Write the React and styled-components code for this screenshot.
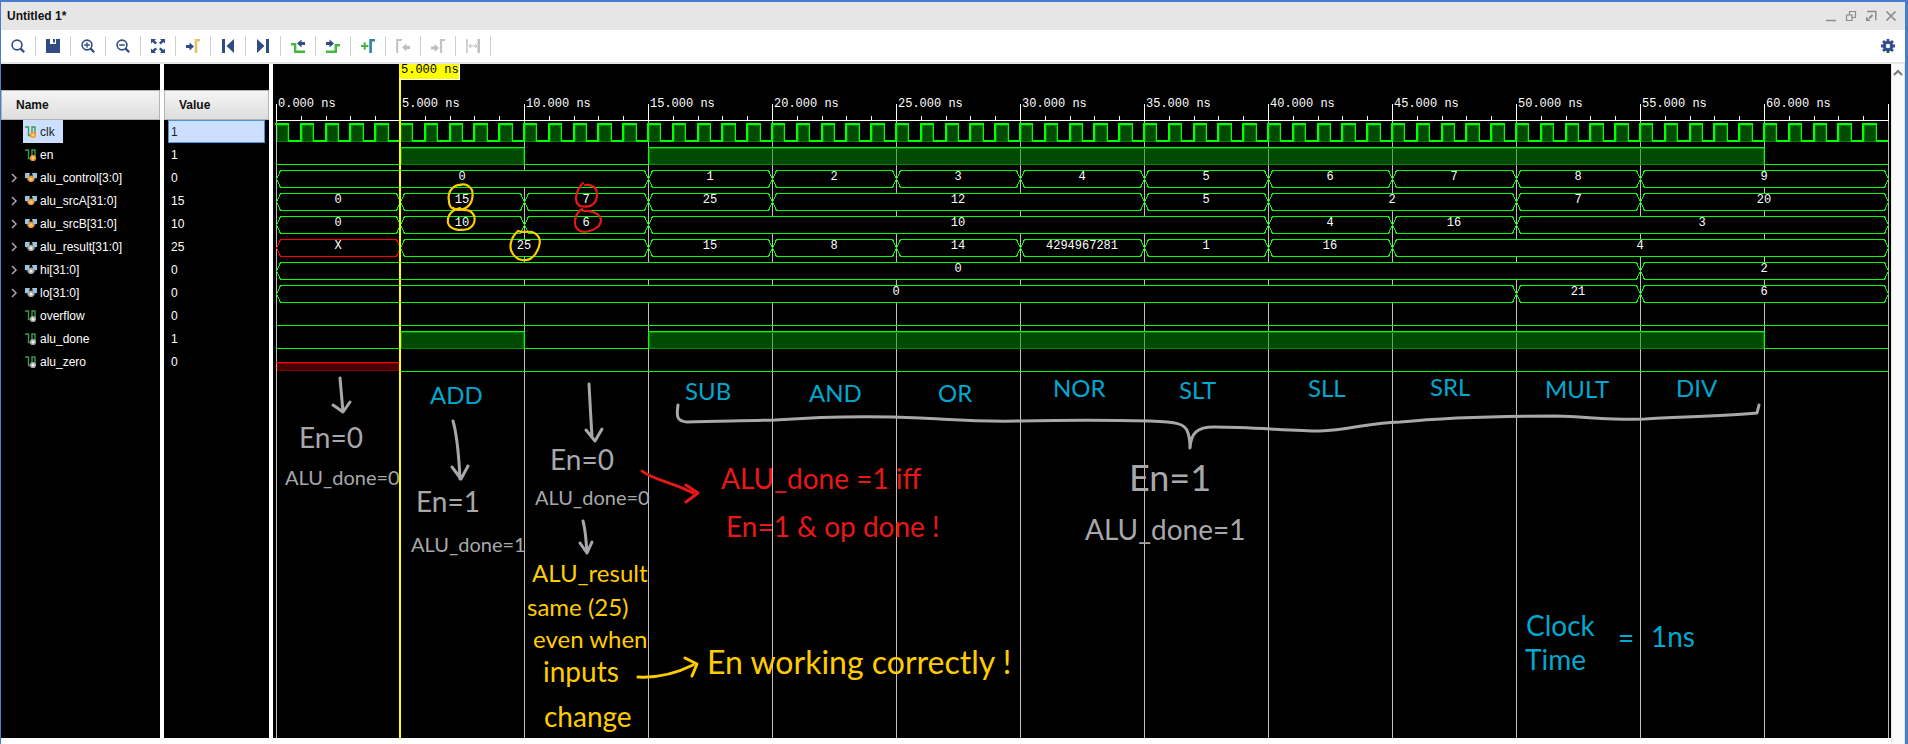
import React from "react";
import styled, { createGlobalStyle } from "styled-components";

const GlobalStyle = createGlobalStyle`
  * { box-sizing: border-box; }
  body { margin: 0; background: #fff; font-family: "Liberation Sans", Arial, sans-serif; font-size: 12px; }
`;

const NAVY = "#2f4c85";
const GREEN = "#00ff00";

const Frame = styled.div`
  display: flex;
  flex-direction: column;
  min-height: 100vh;
  border: solid #4a7bd0;
  border-width: 2px 3px 0 1px;
`;

const TitleBar = styled.header`
  display: flex;
  align-items: center;
  justify-content: space-between;
  height: 28px;
  padding: 0 8px 0 6px;
  background: #e6e6e6;
`;

const Title = styled.h1`
  margin: 0;
  font-size: 12px;
  font-weight: bold;
  color: #111;
`;

const WindowButtons = styled.div`
  display: flex;
  gap: 8px;
`;

const BareButton = styled.button`
  display: flex;
  align-items: center;
  justify-content: center;
  margin: 0;
  padding: 0;
  border: 0;
  background: transparent;
`;

const WindowButton = styled(BareButton)`
  width: 12px;
  height: 12px;
`;

const Toolbar = styled.nav`
  display: flex;
  align-items: center;
  height: 34px;
  padding-right: 10px;
  background: #fff;
  border-bottom: 2px solid #e6e6e6;
`;

const ToolButton = styled(BareButton)`
  width: 35px;
  height: 20px;
  border-right: 1px solid #d0d0d0;
`;

const SettingsButton = styled(BareButton)`
  width: 14px;
  height: 14px;
  margin-left: auto;
`;

const Body = styled.main`
  display: flex;
  flex: 1;
`;

const SignalPanel = styled.section`
  display: flex;
  flex: none;
  width: 272px;
  margin-bottom: 6px;
  background: #000;
`;

const SignalTable = styled.table`
  width: 100%;
  border-collapse: separate;
  border-spacing: 0;
  table-layout: fixed;
  color: #fff;
`;

const NameCol = styled.col`
  width: 163px;
`;

const Spacer = styled.tr`
  height: ${(p) => (p.$height ? p.$height + "px" : "auto")};
  td { padding: 0; border-right: 4px solid #fff; }
`;

const HeadCell = styled.th`
  height: 30px;
  padding: 0;
  border-right: 4px solid #fff;
  text-align: left;
  color: #111;
`;

const HeadLabel = styled.div`
  display: flex;
  align-items: center;
  height: 30px;
  padding-left: 14px;
  border: 1px solid #b4b4b4;
  background: linear-gradient(#f4f4f4, #dedede);
`;

const SignalRow = styled.tr`
  height: 23px;
`;

const SignalCell = styled.td`
  height: 23px;
  padding: 0;
  border-right: 4px solid #fff;
`;

const SignalName = styled.div`
  display: flex;
  align-items: center;
  height: 23px;
  padding-left: 8px;
`;

const Expander = styled.span`
  display: flex;
  width: 14px;
`;

const ExpandButton = styled(BareButton)`
  width: 10px;
  height: 12px;
`;

const NameTag = styled.span`
  display: flex;
  align-items: center;
  gap: 3px;
  height: 23px;
  padding: 0 8px 0 2px;
  white-space: nowrap;
  background: ${(p) => (p.$selected ? "#ccdfff" : "transparent")};
  color: ${(p) => (p.$selected ? "#222" : "#fff")};
`;

const SignalValue = styled.div`
  display: flex;
  align-items: center;
  height: 23px;
  margin: 0 4px;
  padding-left: 2px;
  border: 1px solid ${(p) => (p.$selected ? "#4797d8" : "transparent")};
  background: ${(p) => (p.$selected ? "#ccdfff" : "transparent")};
  color: ${(p) => (p.$selected ? "#222" : "#fff")};
`;

const WaveArea = styled.section`
  display: flex;
  flex: 1;
  min-width: 0;
  margin-bottom: 6px;
  background: #000;
`;

const WaveSvg = styled.svg`
  flex: 1;
  min-width: 0;
  min-height: 674px;
  display: block;
  overflow: hidden;
`;

const MonoText = styled.text`
  font-family: "Liberation Mono", "Courier New", monospace;
  font-size: 12px;
  fill: ${(p) => p.$color || "#fff"};
`;

const HandText = styled.text`
  font-family: Lato, sans-serif;
  font-size: ${(p) => p.$size}px;
  fill: ${(p) => p.$color};
`;

const Ink = styled.path`
  fill: none;
  stroke: ${(p) => p.$color};
  stroke-width: ${(p) => p.$width || 2}px;
  stroke-linecap: round;
  stroke-linejoin: round;
`;

const ScrollTrack = styled.div`
  display: flex;
  justify-content: center;
  flex: none;
  width: 14px;
  padding-top: 4px;
  background: #fafafa;
  border: solid #e6e6e6;
  border-width: 0 1px;
`;

const ScrollButton = styled(BareButton)`
  width: 12px;
  height: 8px;
`;

/* ---------- toolbar icons ---------- */

const Icon = ({ children, size = 14 }) => (
  <svg width={size} height={size} viewBox="0 0 14 14" fill="none" aria-hidden="true">
    {children}
  </svg>
);

const Lens = ({ children }) => (
  <Icon>
    <circle cx="6" cy="6" r="4.9" stroke={NAVY} strokeWidth="1.6" />
    <path d="M9.6 9.6 13.2 13.2" stroke={NAVY} strokeWidth="2.2" />
    {children}
  </Icon>
);

const arrowRight = (x, y, c) => (
  <path d={`M${x} ${y - 1.5}h3.5v-2.5l4.5 4-4.5 4v-2.5h-3.5z`} fill={c} />
);
const arrowLeft = (x, y, c) => (
  <path d={`M${x} ${y - 1.5}h-3.5v-2.5l-4.5 4 4.5 4v-2.5h3.5z`} fill={c} />
);

const TOOLS = [
  ["Find", <Lens />],
  ["Save", <Icon><path d="M0 0h4v5h6V0h4v14H0z" fill={NAVY} /><path d="M7 0h2v3.5H7z" fill={NAVY} /></Icon>],
  ["Zoom in", <Lens><path d="M3.2 6h5.6M6 3.2v5.6" stroke={NAVY} strokeWidth="1.3" /></Lens>],
  ["Zoom out", <Lens><path d="M3.2 6h5.6" stroke={NAVY} strokeWidth="1.5" /></Lens>],
  ["Zoom fit", <Icon>
    <path d="M0 0h5L3.6 1.4 6 3.8 4.3 5.5 1.6 3 0 4.6zM14 0v4.6L12.4 3 9.7 5.5 8 3.8l2.400-2.400L9 0zM0 14V9.400L1.600 11l2.700-2.500L6 10.200l-2.400 2.400L5 14zM14 14H9l1.400-1.400L8 10.200l1.700-1.700 2.700 2.500L14 9.400z" fill={NAVY} />
  </Icon>],
  ["Go to cursor", <Icon>{arrowRight(0, 7.5, NAVY)}<path d="M10 14V1.200h4" stroke="#e3c567" strokeWidth="2.600" /></Icon>],
  ["Previous", <Icon><path d="M1 0h3v14H1zM13 0v14L5.500 7z" fill={NAVY} /></Icon>],
  ["Next", <Icon><path d="M13 0h-3v14h3zM1 0v14l7.500-7z" fill={NAVY} /></Icon>],
  ["Previous transition", <Icon>
    <path d="M0 5.200h4.200v7.600H14" stroke="#43b83c" strokeWidth="2.400" />{arrowLeft(14, 4.5, NAVY)}
  </Icon>],
  ["Next transition", <Icon>
    <path d="M0 12.800h9.800V6.200H14" stroke="#43b83c" strokeWidth="2.400" />{arrowRight(0, 4.5, NAVY)}
  </Icon>],
  ["Add marker", <Icon>
    <path d="M0 7h7.400M3.700 3.300v7.400" stroke="#43b83c" strokeWidth="2" /><path d="M9.600 14V1.200H14" stroke="#2f7fb0" strokeWidth="2.600" />
  </Icon>],
  ["Previous marker", <Icon>
    <path d="M1.200 14V1H6" stroke="#c3c3c3" strokeWidth="2" />{arrowLeft(14, 8.5, "#bdbdbd")}
  </Icon>],
  ["Next marker", <Icon>
    {arrowRight(0, 9, "#bdbdbd")}<path d="M10 14V1h4" stroke="#c3c3c3" strokeWidth="2.200" />
  </Icon>],
  ["Swap cursors", <Icon>
    <path d="M1 1v12M0 1h2M0 13h2" stroke="#c3c3c3" strokeWidth="1.500" /><path d="M12.700 0v14" stroke="#bdbdbd" strokeWidth="2.400" />
    <path d="M3 7h8M5 5 3 7l2 2M9 5l2 2-2 2" stroke="#bdbdbd" strokeWidth="1" />
  </Icon>],
];

const Gear = () => (
  <Icon>
    <circle cx="7" cy="7" r="3.7" stroke={NAVY} strokeWidth="3" />
    {[0, 45, 90, 135].map((a) => (
      <path key={a} d="M7 0v2.500M7 11.500V14" stroke={NAVY} strokeWidth="2.800" transform={`rotate(${a} 7 7)`} />
    ))}
  </Icon>
);

const WINDOW_TOOLS = [
  ["Minimize", <path d="M1 10.500h10" stroke="#8c8c8c" strokeWidth="1.500" />],
  ["Restore", <g stroke="#8c8c8c" strokeWidth="1.200"><path d="M1.500 5h5.500v5.500H1.500z" /><path d="M4.500 5V1.500H10.500V7.500H7" /></g>],
  ["Float", <g stroke="#8c8c8c"><path d="M2 1.500h8.800v8.800" strokeWidth="1.500" /><path d="M7.500 5 4 8.500" strokeWidth="2" /><path d="M1 6.500V11h4.500z" fill="#8c8c8c" stroke="none" /></g>],
  ["Close", <path d="M1.500 1.500l9 9M10.500 1.500l-9 9" stroke="#8c8c8c" strokeWidth="1.700" />],
];

/* ---------- signals ---------- */

const SIGNALS = [
  { name: "clk", value: "1", kind: "wire", dir: "in", selected: true },
  { name: "en", value: "1", kind: "wire", dir: "in" },
  { name: "alu_control[3:0]", value: "0", kind: "bus", dir: "in" },
  { name: "alu_srcA[31:0]", value: "15", kind: "bus", dir: "in" },
  { name: "alu_srcB[31:0]", value: "10", kind: "bus", dir: "in" },
  { name: "alu_result[31:0]", value: "25", kind: "bus", dir: "out" },
  { name: "hi[31:0]", value: "0", kind: "bus", dir: "out" },
  { name: "lo[31:0]", value: "0", kind: "bus", dir: "out" },
  { name: "overflow", value: "0", kind: "wire", dir: "out" },
  { name: "alu_done", value: "1", kind: "wire", dir: "out" },
  { name: "alu_zero", value: "0", kind: "wire", dir: "out" },
];

const SignalIcon = ({ kind, dir }) => {
  const ring = dir === "in" ? "#f59a2c" : "#a9a9a9";
  const core = dir === "in" ? "#ffd08a" : "#f0f0f0";
  return (
    <svg width="12" height="14" viewBox="0 0 12 14" fill="none" aria-hidden="true">
      {kind === "wire" ? (
        <path d="M0 2h3.500v8.500H7V2h3v7" stroke="#3c9a4c" strokeWidth="1.400" />
      ) : (
        <g>
          <path d="M0 2h5v5H0zM7 2h5v5H7z" fill="#9cc3d9" />
          <path d="M4 2l2 3 2-3v7H4zM1 7h3l1 3H3z M11 7H8L7 10h2z" fill="#56636c" />
        </g>
      )}
      <circle cx={kind === "wire" ? 8 : 6} cy={kind === "wire" ? 10 : 8} r="2.3" fill={core} stroke={ring} strokeWidth="1.6" />
    </svg>
  );
};

/* ---------- waveform ---------- */

const X0 = 3;
const PX_PER_NS = 24.8;
const END = 65;
const at = (t) => X0 + Math.round(t * PX_PER_NS);
const rowTop = (i) => 60 + 23 * i;
const rowBottom = (i) => 77 + 23 * i;

const BUSES = [
  { row: 2, parts: [[0, 15, "0"], [15, 20, "1"], [20, 25, "2"], [25, 30, "3"], [30, 35, "4"], [35, 40, "5"], [40, 45, "6"], [45, 50, "7"], [50, 55, "8"], [55, 65, "9"]] },
  { row: 3, parts: [[0, 5, "0"], [5, 10, "15"], [10, 15, "7"], [15, 20, "25"], [20, 35, "12"], [35, 40, "5"], [40, 50, "2"], [50, 55, "7"], [55, 65, "20"]] },
  { row: 4, parts: [[0, 5, "0"], [5, 10, "10"], [10, 15, "6"], [15, 40, "10"], [40, 45, "4"], [45, 50, "16"], [50, 65, "3"]] },
  { row: 5, parts: [[0, 5, "X"], [5, 15, "25"], [15, 20, "15"], [20, 25, "8"], [25, 30, "14"], [30, 35, "4294967281"], [35, 40, "1"], [40, 45, "16"], [45, 65, "4"]] },
  { row: 6, parts: [[0, 55, "0"], [55, 65, "2"]] },
  { row: 7, parts: [[0, 50, "0"], [50, 55, "21"], [55, 65, "6"]] },
];

const BusPart = ({ row, from, to, label }) => {
  const a = at(from) + 0.5;
  const b = at(to) + 0.5;
  const top = rowTop(row) + 0.5;
  const bottom = rowBottom(row) + 0.5;
  const mid = (top + bottom) / 2;
  return (
    <g>
      <path
        d={`M${a} ${mid}L${a + 4} ${top}H${b - 4}L${b} ${mid}L${b - 4} ${bottom}H${a + 4}Z`}
        fill="#000"
        stroke={label === "X" ? "#ff0000" : GREEN}
        shapeRendering="crispEdges"
      />
      <MonoText x={Math.round((a + b) / 2) - 1} y={rowTop(row) + 10} textAnchor="middle">{label}</MonoText>
    </g>
  );
};

const Clock = () => {
  const top = rowTop(0);
  const bottom = rowBottom(0);
  let d = `M${X0 - 1} ${top}`;
  const fills = [];
  for (let t = 0; t < END; t++) {
    const rise = at(t);
    const fall = at(t + 0.5);
    d += t === 0 ? `H${fall}V${bottom}` : `H${rise}V${top}H${fall}V${bottom}`;
    fills.push(<rect key={t} x={rise + 1.5} y={top + 1.5} width={fall - rise - 2} height={bottom - top - 1} />);
  }
  d += `H${at(END)}`;
  return (
    <g shapeRendering="crispEdges">
      <path d={d} fill="none" stroke={GREEN} strokeWidth="2" />
      <g fill="#004b00" stroke="#007d00">{fills}</g>
    </g>
  );
};

const Level = ({ row, highs, from = 0 }) => {
  const top = rowTop(row) + 0.5;
  const bottom = rowBottom(row) + 0.5;
  let d = `M${at(from)} ${bottom}`;
  highs.forEach(([a, b]) => {
    d += `H${at(a) + 0.5}V${top}H${at(b) + 0.5}V${bottom}`;
  });
  d += `H${at(END)}`;
  return (
    <g shapeRendering="crispEdges">
      <path d={d} fill="none" stroke={GREEN} />
      {highs.map(([a, b]) => (
        <rect key={a} x={at(a) + 1.5} y={top + 1} width={at(b) - at(a) - 2} height={bottom - top - 1} fill="rgba(0,150,0,0.5)" stroke="#008700" />
      ))}
    </g>
  );
};

const majors = Array.from({ length: 14 }, (_, i) => i * 5);
const minors = Array.from({ length: 65 }, (_, i) => i).filter((t) => t % 5);

const GREY = "#a8a8ac";
const CYAN = "#00a8d0";
const YELLOW = "#ffcc00";
const RED = "#e81818";

const NOTES = [
  [299, 448, 28, GREY, "En=0"],
  [285, 485, 20, GREY, "ALU_done=0"],
  [430, 404, 24, CYAN, "ADD"],
  [416, 512, 28, GREY, "En=1"],
  [411, 552, 20, GREY, "ALU_done=1"],
  [550, 470, 28, GREY, "En=0"],
  [535, 505, 20, GREY, "ALU_done=0"],
  [532, 582, 24, YELLOW, "ALU_result"],
  [527, 616, 24, YELLOW, "same (25)"],
  [533, 648, 24, YELLOW, "even when"],
  [543, 682, 28, YELLOW, "inputs"],
  [544, 727, 28, YELLOW, "change"],
  [707, 674, 32, YELLOW, "En working correctly !"],
  [721, 489, 28, RED, "ALU_done =1 iff"],
  [726, 537, 28, RED, "En=1 & op done !"],
  [685, 400, 24, CYAN, "SUB"],
  [809, 402, 24, CYAN, "AND"],
  [938, 402, 24, CYAN, "OR"],
  [1053, 397, 24, CYAN, "NOR"],
  [1179, 399, 24, CYAN, "SLT"],
  [1308, 397, 24, CYAN, "SLL"],
  [1430, 396, 24, CYAN, "SRL"],
  [1545, 398, 24, CYAN, "MULT"],
  [1676, 397, 24, CYAN, "DIV"],
  [1129, 491, 36, GREY, "En=1"],
  [1085, 540, 28, GREY, "ALU_done=1"],
  [1526, 636, 28, CYAN, "Clock"],
  [1525, 670, 28, CYAN, "Time"],
  [1618, 648, 28, CYAN, "="],
  [1651, 647, 28, CYAN, "1ns"],
];

const STROKES = [
  [GREY, 3, "M340 378C341 390 342 400 343 412M333 405L343 412L350 402"],
  [GREY, 3, "M453 421C458 438 459 460 460 479M452 467L461 479L468 466"],
  [GREY, 3, "M589 384C590 402 591 422 592 436M586 430L595 441L602 429"],
  [GREY, 3, "M583 521C586 532 586 542 587 553M580 543L587 553L592 542"],
  [RED, 3, "M642 471C651 479 674 483 693 493M686 485L698 493L686 502"],
  [YELLOW, 3, "M638 677C658 678 675 674 693 665M685 658L697 664L692 676"],
  [GREY, 3, "M678 405C677 414 675 421 687 422C720 421 745 421 775 420C830 416 880 416 920 418C960 420 980 422 1020 421C1065 420 1110 420 1150 421C1175 422 1186 423 1188 433C1190 439 1190 443 1190 448C1191 433 1197 427 1214 427C1255 427 1290 431 1320 431C1350 430 1365 423 1400 422C1450 417 1500 416 1555 416C1590 417 1610 420 1645 419C1680 417 1725 416 1757 413L1759 405"],
  [YELLOW, 2.2, "M462 185C453 184 447 192 449 201C449 209 455 211 463 209C471 207 474 198 472 190C470 186 465 183 460 185"],
  [YELLOW, 2.2, "M460 208C451 210 447 216 448 223C450 230 460 231 468 229C476 225 477 216 470 211C465 209 457 211 453 208"],
  [YELLOW, 2.2, "M518 231C511 237 508 248 513 254C518 262 530 263 536 253C542 243 541 235 532 232C526 231 522 233 518 231"],
  [RED, 2.2, "M583 183C576 190 573 202 580 206C588 208 597 206 597 194C597 187 591 184 585 185"],
  [RED, 2.2, "M582 209C574 214 572 227 580 231C588 234 601 228 601 220C600 213 590 210 584 211"],
];

const Waveform = () => (
  <WaveSvg role="img" aria-label="ALU simulation waveform">
    <g shapeRendering="crispEdges">
      {majors.map((t) => (
        <g key={t}>
          <line x1={at(t) + 0.5} x2={at(t) + 0.5} y1="56" y2="100%" stroke="#bebebe" />
          <line x1={at(t) + 0.5} x2={at(t) + 0.5} y1="40" y2="57" stroke="#fff" />
        </g>
      ))}
      {minors.map((t) => (
        <line key={t} x1={at(t) + 0.5} x2={at(t) + 0.5} y1="52" y2="56" stroke="#fff" />
      ))}
      <line x1={at(0)} x2={at(END)} y1="56.5" y2="56.5" stroke="#fff" />
    </g>
    {majors.slice(0, 13).map((t) => (
      <MonoText key={t} x={at(t) + 2} y="43">{`${t}.000 ns`}</MonoText>
    ))}
    <Clock />
    <Level row={1} highs={[[5, 10], [15, 60]]} />
    {BUSES.map((b) =>
      b.parts.map(([from, to, label]) => (
        <BusPart key={b.row + "-" + from} row={b.row} from={from} to={to} label={label} />
      ))
    )}
    <Level row={8} highs={[]} />
    <Level row={9} highs={[[5, 10], [15, 60]]} />
    <Level row={10} highs={[]} from={5} />
    <g shapeRendering="crispEdges">
      <rect x={at(0) + 1.5} y="299.5" width={at(5) - at(0) - 3} height="7" fill="#4b0000" stroke="#7d0000" />
      <line x1={at(0)} x2={at(5)} y1="298.5" y2="298.5" stroke="#ff0000" />
      <rect x={at(5) - 1} y="0" width="2" height="100%" fill="#ffff00" />
      <path d={`M${at(5) - 1} 0h61v16h-61z`} fill="#fff" />
      <path d={`M${at(5) - 1} 0h60v15h-60z`} fill="#ffff00" />
    </g>
    <MonoText x={at(5) + 1} y="9" $color="#000">5.000 ns</MonoText>
    <g transform="translate(-273 -64)">
      {STROKES.map(([color, width, d]) => <Ink key={d} $color={color} $width={width} d={d} />)}
      {NOTES.map(([x, y, size, color, text]) => (
        <HandText key={x + "-" + y} x={x} y={y} $size={size} $color={color}>{text}</HandText>
      ))}
    </g>
  </WaveSvg>
);

export default function App() {
  return (
    <Frame>
      <GlobalStyle />
      <TitleBar>
        <Title>Untitled 1*</Title>
        <WindowButtons>
          {WINDOW_TOOLS.map(([label, art]) => (
            <WindowButton key={label} aria-label={label}>
              <svg width="12" height="12" viewBox="0 0 12 12" fill="none" aria-hidden="true">{art}</svg>
            </WindowButton>
          ))}
        </WindowButtons>
      </TitleBar>
      <Toolbar>
        {TOOLS.map(([label, art]) => (
          <ToolButton key={label} aria-label={label}>{art}</ToolButton>
        ))}
        <SettingsButton aria-label="Settings"><Gear /></SettingsButton>
      </Toolbar>
      <Body>
        <SignalPanel>
          <SignalTable>
            <colgroup><NameCol /><col /></colgroup>
            <thead>
              <Spacer $height={26}><td /><td /></Spacer>
              <tr>
                <HeadCell><HeadLabel>Name</HeadLabel></HeadCell>
                <HeadCell><HeadLabel>Value</HeadLabel></HeadCell>
              </tr>
            </thead>
            <tbody>
              {SIGNALS.map((s) => (
                <SignalRow key={s.name}>
                  <SignalCell>
                    <SignalName>
                      <Expander>
                        {s.kind === "bus" && (
                          <ExpandButton aria-label={`Expand ${s.name}`}>
                            <svg width="8" height="10" viewBox="0 0 8 10" fill="none" aria-hidden="true">
                              <path d="M2 1l4 4-4 4" stroke="#a8a8a8" strokeWidth="1.5" />
                            </svg>
                          </ExpandButton>
                        )}
                      </Expander>
                      <NameTag $selected={s.selected}>
                        <SignalIcon kind={s.kind} dir={s.dir} />
                        {s.name}
                      </NameTag>
                    </SignalName>
                  </SignalCell>
                  <SignalCell><SignalValue $selected={s.selected}>{s.value}</SignalValue></SignalCell>
                </SignalRow>
              ))}
              <Spacer><td /><td /></Spacer>
            </tbody>
          </SignalTable>
        </SignalPanel>
        <WaveArea><Waveform /></WaveArea>
        <ScrollTrack>
          <ScrollButton aria-label="Scroll up">
            <svg width="10" height="7" viewBox="0 0 10 7" fill="none" aria-hidden="true">
              <path d="M1 6l4-4 4 4" stroke="#777" strokeWidth="2" />
            </svg>
          </ScrollButton>
        </ScrollTrack>
      </Body>
    </Frame>
  );
}
